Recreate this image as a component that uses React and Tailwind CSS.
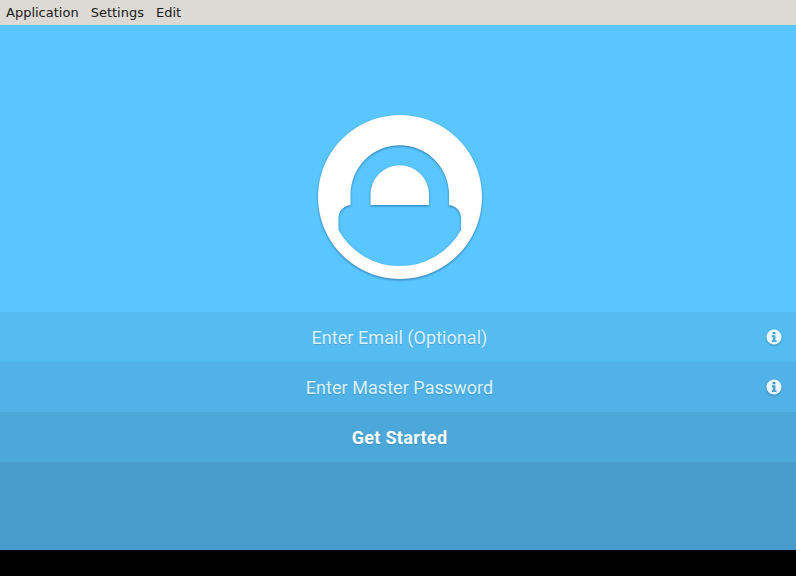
import React from "react";

const Logo = () => (
  <svg width="170" height="170" viewBox="0 0 170 170" className="drop-shadow-[0_1px_1px_rgba(0,50,90,0.5)]">
    <path
      fill="#fff"
      fillRule="evenodd"
      d="M85 3a82 82 0 1 0 0.01 0Z M35.500 82.500a49.250 49.250 0 0 1 98.500 0V93c7 1 12 6 12 13v12A70 70 0 0 1 23.500 118V106c0-7 5-12 12-13Z M55.500 93V82.500a29.250 29.250 0 0 1 58.500 0V93Z"
    />
  </svg>
);

const InfoIcon = () => (
  <svg
    width="16"
    height="16"
    viewBox="0 0 16 16"
    className="absolute right-[17px] top-[17px] drop-shadow-[0_1px_1px_rgba(0,0,0,0.25)]"
  >
    <path
      fill="#e9f7ff"
      fillRule="evenodd"
      d="M8 .5a7.500 7.500 0 1 0 .01 0Z M6.600 3h2.800v2.200H6.600Z M5.800 6.300h3.600v4.900h1v1.700H5.800v-1.700h1V8H5.800Z"
    />
  </svg>
);

const Field = ({ placeholder, bg }) => (
  <div className={`relative h-[50px] flex items-center ${bg}`}>
    <input
      placeholder={placeholder}
      className="w-full h-full bg-transparent text-center text-[18px] tracking-[0.05px] font-['Roboto',sans-serif] placeholder:text-[#d9f1ff] placeholder:opacity-100 outline-none [text-shadow:0_1px_1px_rgba(0,0,0,0.15)]"
    />
    <InfoIcon />
  </div>
);

export default function App() {
  return (
    <div className="h-[576px] w-[796px] flex flex-col bg-black overflow-hidden">
      <div className="h-[25px] flex-none bg-[#dcdad5] flex items-center gap-3 px-1.5 text-[13px] text-[#1a1a1a] font-['DejaVu_Sans',sans-serif]">
        <span>Application</span>
        <span>Settings</span>
        <span>Edit</span>
      </div>
      <div className="w-[799px] flex-none flex flex-col">
        <div className="h-[287px] bg-[#59c6ff] flex justify-center pt-[87px]">
          <Logo />
        </div>
        <Field placeholder="Enter Email (Optional)" bg="bg-[#55bcf2]" />
        <Field placeholder="Enter Master Password" bg="bg-[#50b2e6]" />
        <div className="h-[50px] bg-[#4ca8d9] flex items-center justify-center text-[18px] tracking-[0.3px] font-bold text-white font-['Roboto',sans-serif] [text-shadow:0_1px_1px_rgba(0,0,0,0.15)]">
          Get Started
        </div>
        <div className="h-[88px] bg-[#479ecc]"></div>
      </div>
    </div>
  );
}
